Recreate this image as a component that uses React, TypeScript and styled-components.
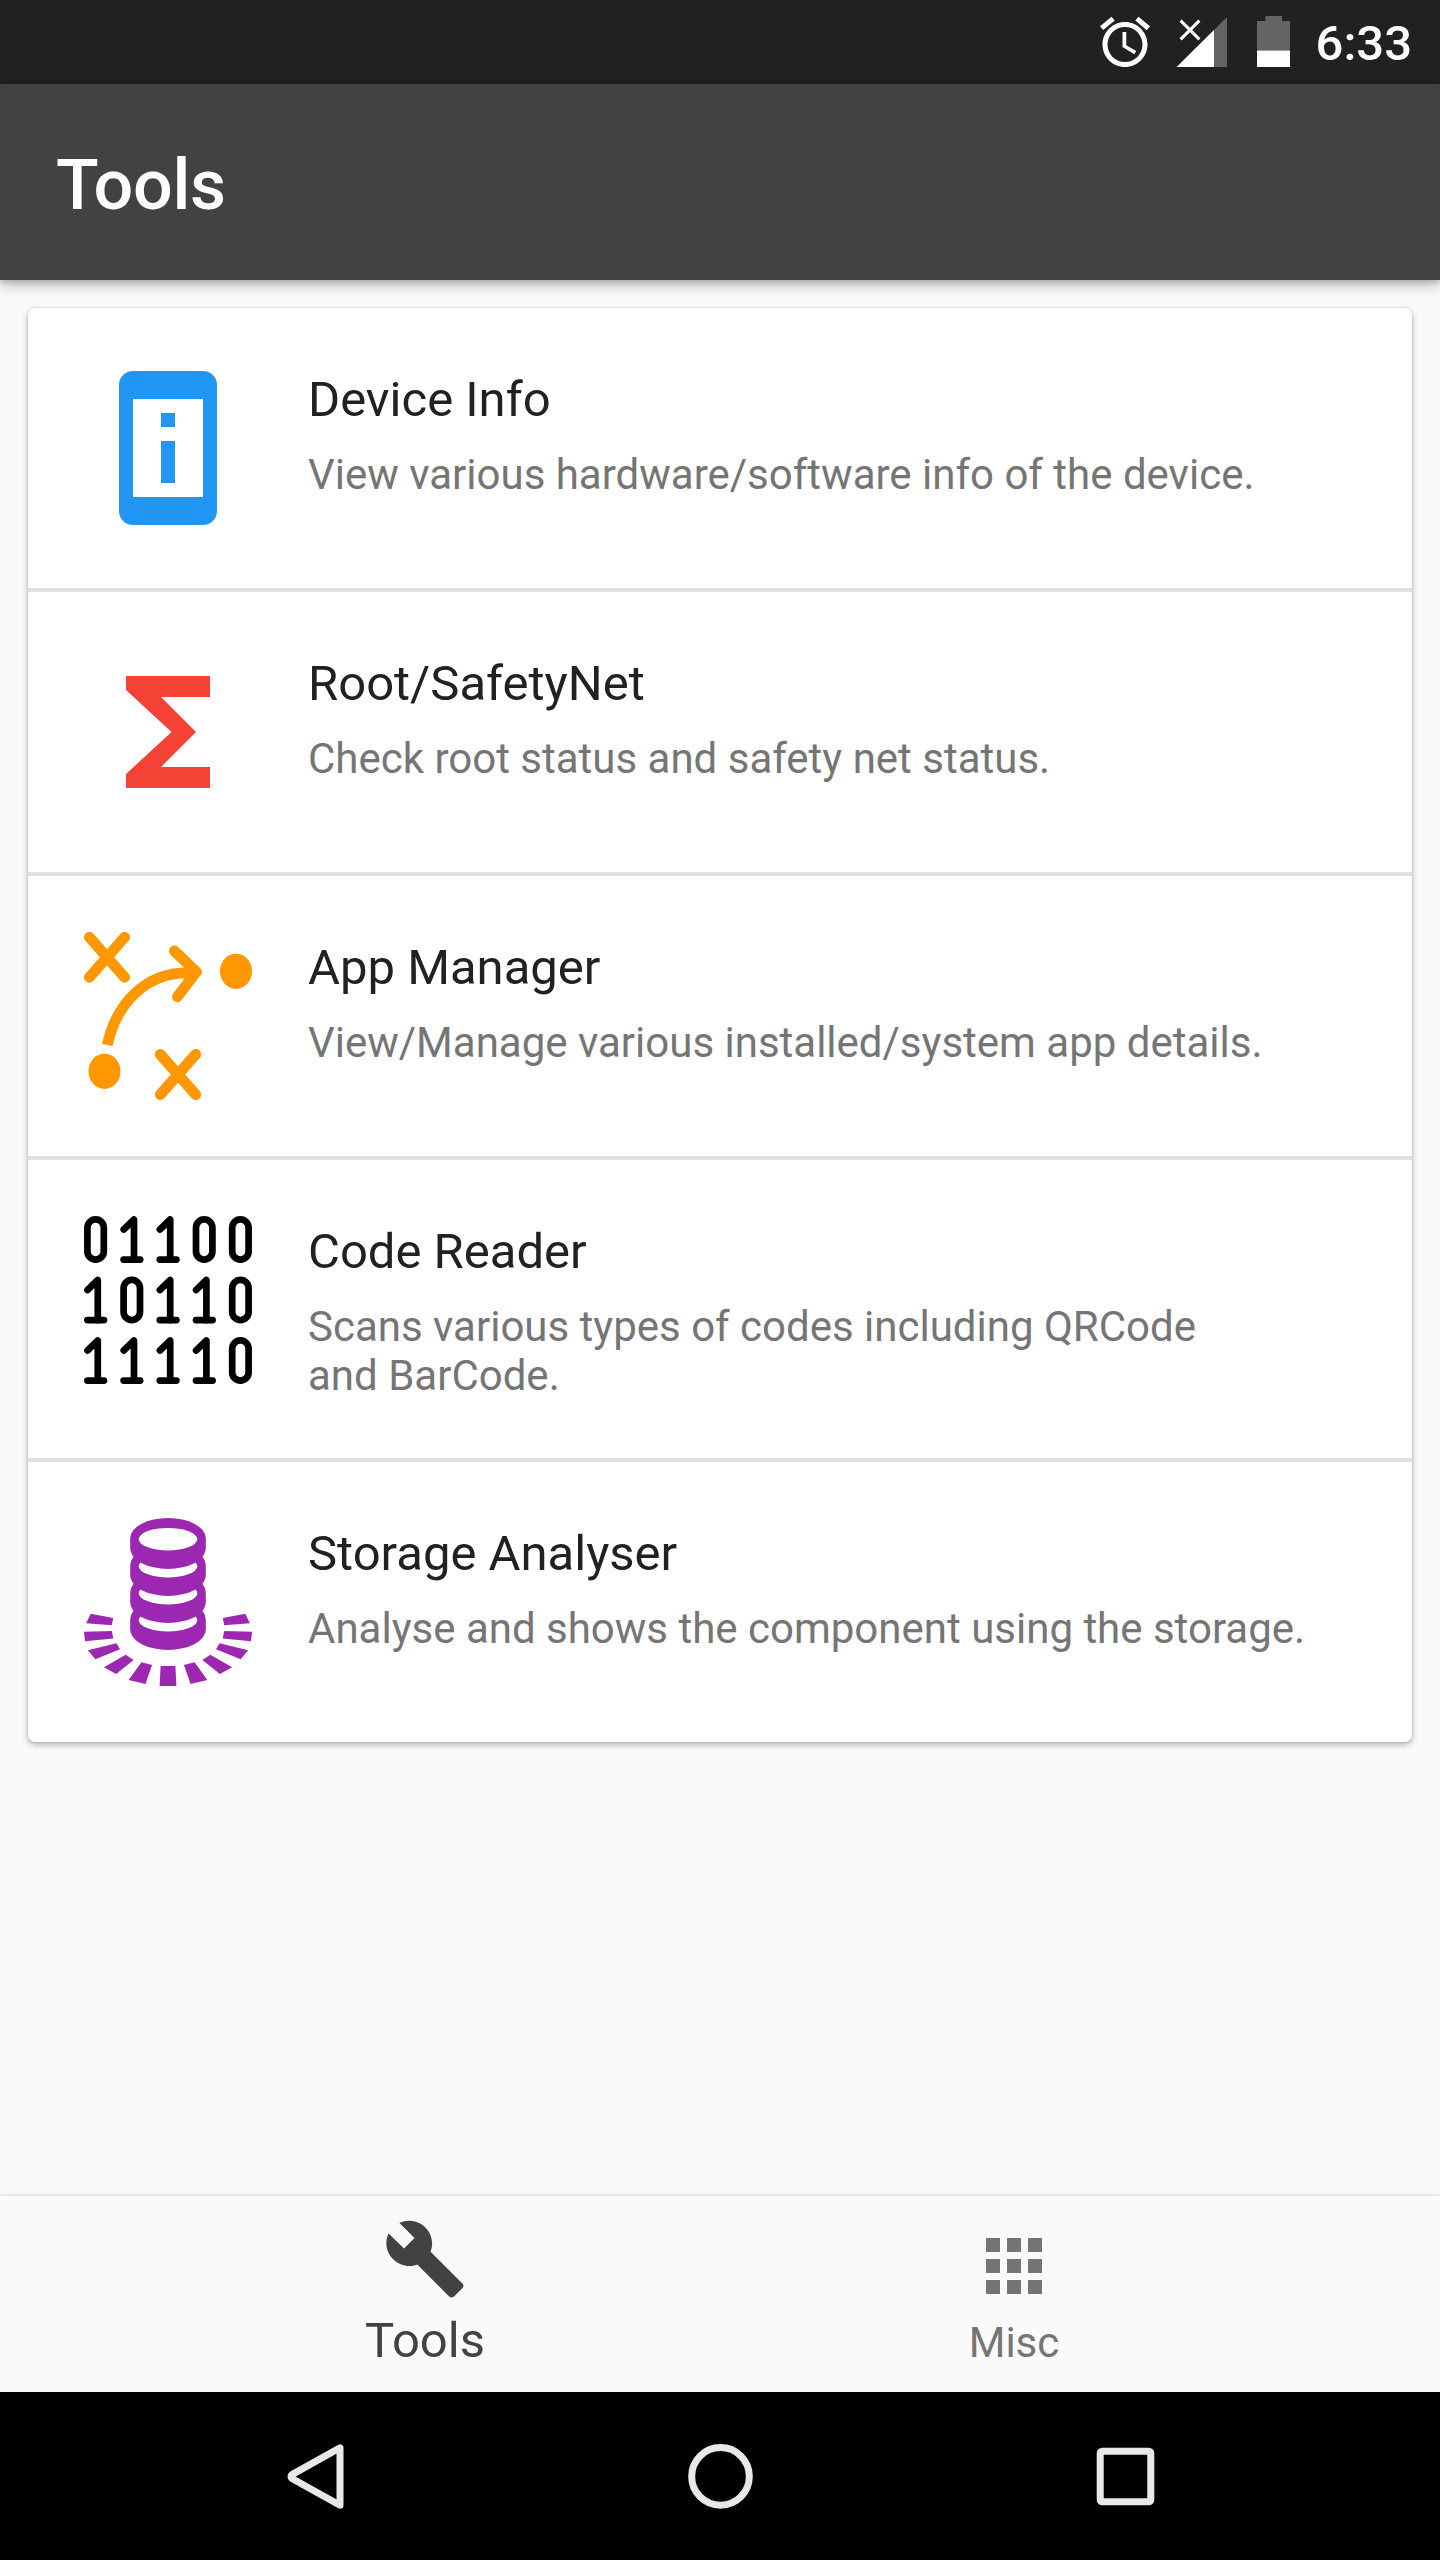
import React from "react";
import styled, { createGlobalStyle } from "styled-components";

const GlobalStyle = createGlobalStyle`
  * { box-sizing: border-box; }
  body { margin: 0; background: #fafafa; }
`;

const Screen = styled.div`
  display: flex;
  flex-direction: column;
  width: 1440px;
  height: 2560px;
  overflow: hidden;
  background: #fafafa;
  font-family: Roboto, "Liberation Sans", sans-serif;
`;

const StatusBar = styled.header`
  display: flex;
  align-items: flex-start;
  justify-content: flex-end;
  height: 84px;
  padding: 12px 28px 0 0;
  background: #212121;
  color: #fff;
  flex: none;
`;

const StatusIcons = styled.div`
  display: flex;
  height: 60px;
  margin-right: 25px;
`;

const Clock = styled.time`
  font-size: 49px;
  font-weight: 500;
  line-height: 64px;
`;

const AppBar = styled.div`
  display: flex;
  align-items: center;
  height: 196px;
  padding: 6px 56px 0;
  background: #424242;
  box-shadow: 0 5px 12px rgba(0, 0, 0, 0.28), 0 2px 5px rgba(0, 0, 0, 0.12);
  flex: none;
`;

const Title = styled.h1`
  margin: 0;
  color: #fff;
  font-size: 70px;
  font-weight: 500;
  line-height: 82px;
  letter-spacing: -0.3px;
`;

const Content = styled.main`
  flex: 1;
  padding: 28px;
`;

const Card = styled.ul`
  margin: 0;
  padding: 0;
  list-style: none;
  background: #fff;
  border-radius: 7px;
  box-shadow: 0 3px 6px rgba(0, 0, 0, 0.27), 0 0 3px rgba(0, 0, 0, 0.16);
`;

const Row = styled.li`
  display: flex;
  gap: 56px;
  padding: 56px;

  & + & {
    border-top: 4px solid #e0e0e0;
  }
`;

const RowIcon = styled.svg`
  display: block;
  width: 168px;
  height: 168px;
  flex: none;
`;

const RowText = styled.div`
  display: flex;
  flex-direction: column;
  gap: 22px;
  padding: 7px 0 2px;
`;

const RowTitle = styled.span`
  color: #212121;
  font-size: 49px;
  line-height: 57px;
  white-space: nowrap;
`;

const RowSummary = styled.span`
  color: #757575;
  font-size: 42px;
  line-height: 49px;
  white-space: pre;
`;

const BottomNav = styled.nav`
  display: flex;
  justify-content: center;
  height: 196px;
  padding-right: 1px;
  background: #fafafa;
  box-shadow: 0 -1px 4px rgba(0, 0, 0, 0.07), 0 -2px 0 rgba(0, 0, 0, 0.03);
  flex: none;
`;

const Tab = styled.div<{ $active?: boolean }>`
  display: flex;
  flex-direction: column;
  align-items: center;
  justify-content: flex-end;
  gap: ${(p) => (p.$active ? "11px" : "10px")};
  width: 589px;
  padding-bottom: ${(p) => (p.$active ? "23px" : "25px")};
  color: ${(p) => (p.$active ? "#424242" : "#757575")};
  font-size: ${(p) => (p.$active ? "49px" : "42px")};
  line-height: ${(p) => (p.$active ? "57px" : "49px")};
`;

const TabIcon = styled.svg`
  display: block;
  width: 84px;
  height: 84px;
  fill: currentColor;
`;

const SystemBar = styled.footer`
  display: flex;
  align-items: center;
  justify-content: center;
  gap: 313px;
  height: 168px;
  background: #000;
  flex: none;
`;

const SystemIcon = styled.svg`
  display: block;
  width: 92px;
  height: 92px;
  fill: none;
  stroke: #e8e8e8;
  stroke-width: 7;
  stroke-linejoin: round;
`;

const DeviceIcon = () => (
  <RowIcon viewBox="0 0 24 24" fill="#2196f3">
    <path
      fillRule="evenodd"
      d="M7 1h10a2 2 0 0 1 2 2v18a2 2 0 0 1-2 2H7a2 2 0 0 1-2-2V3a2 2 0 0 1 2-2zM7 5v14h10V5zM11 7h2v2h-2zM11 11h2v6h-2z"
    />
  </RowIcon>
);

const SigmaIcon = () => (
  <RowIcon viewBox="0 0 24 24" fill="#f44336">
    <path d="M18 4H6v2l6.5 6L6 18v2h12v-3h-7l5-5-5-5h7z" />
  </RowIcon>
);

const StrategyIcon = () => (
  <RowIcon
    viewBox="0 0 168 168"
    fill="none"
    stroke="#ff9800"
    strokeWidth="10.8"
    strokeLinecap="round"
    strokeLinejoin="round"
  >
    <path d="M5.4 5.3 40.6 45.3M40.6 5.3 5.4 45.3" />
    <path d="M76.3 122.4 111.7 162.6M111.7 122.4 76.3 162.6" />
    <path d="M90.4 19 112.4 39.8 93.4 64.8" />
    <path strokeLinecap="butt" d="M23.3 113C32 72 62 38.5 108 41" />
    <ellipse cx="152" cy="39.3" rx="16" ry="17.6" fill="#ff9800" stroke="none" />
    <ellipse cx="20.5" cy="139.3" rx="16" ry="17.6" fill="#ff9800" stroke="none" />
  </RowIcon>
);

const BITS = ["01100", "10110", "11110"];

const BinaryIcon = () => (
  <RowIcon
    viewBox="0 0 168 168"
    fill="none"
    stroke="#000"
    strokeWidth="6.7"
    strokeLinecap="round"
    strokeLinejoin="round"
  >
    {BITS.map((row, r) =>
      row.split("").map((bit, c) => (
        <g key={`${r}${c}`} transform={`translate(${c * 36.2} ${r * 60.5})`}>
          {bit === "0" ? (
            <rect x="3.4" y="3.4" width="16.4" height="40.2" rx="8.2" />
          ) : (
            <>
              <polyline points="3.5,13.5 13.8,3.5 13.8,43.6" />
              <line x1="3.4" y1="43.6" x2="20" y2="43.6" />
            </>
          )}
        </g>
      ))
    )}
  </RowIcon>
);

const RAYS = [
  "6.7,95.7 29.2,100 27.8,107.3 2.1,105.3",
  "0,113.7 27.8,113 29.2,120.6 1,123.3",
  "3.9,132.3 32.4,125.3 36,131.3 11.4,141.3",
  "19.9,149.3 41.7,136.7 49.6,142 32.1,156",
  "44.6,162 57.4,144.3 68.1,147 61.4,166",
];

const StorageIcon = () => (
  <RowIcon viewBox="0 0 168 168" fill="#9c27b0">
    {[3, 2, 1, 0].map((i) => (
      <g key={i} transform={`translate(0 ${i * 27})`}>
        <path d="M46.2 20.3a37.8 20.3 0 0 1 75.6 0v10.3a37.8 20.3 0 0 1-75.6 0z" />
        <ellipse cx="84" cy="21.2" rx="29.3" ry="11.2" fill="#fff" />
      </g>
    ))}
    {RAYS.map((points) => (
      <g key={points}>
        <polygon points={points} />
        <polygon points={points} transform="translate(168 0) scale(-1 1)" />
      </g>
    ))}
    <polygon points="76.6,148 91.4,148 92.4,168 75.6,168" />
  </RowIcon>
);

const TOOLS = [
  {
    title: "Device Info",
    summary: "View various hardware/software info of the device.",
    Icon: DeviceIcon,
  },
  {
    title: "Root/SafetyNet",
    summary: "Check root status and safety net status.",
    Icon: SigmaIcon,
  },
  {
    title: "App Manager",
    summary: "View/Manage various installed/system app details.",
    Icon: StrategyIcon,
  },
  {
    title: "Code Reader",
    summary: "Scans various types of codes including QRCode\nand BarCode.",
    Icon: BinaryIcon,
  },
  {
    title: "Storage Analyser",
    summary: "Analyse and shows the component using the storage.",
    Icon: StorageIcon,
  },
];

export default function App() {
  return (
    <Screen>
      <GlobalStyle />
      <StatusBar>
        <StatusIcons>
          <svg width="60" height="60" viewBox="0 0 24 24" fill="#fff">
            <path d="M22 5.72l-4.6-3.86-1.29 1.53 4.6 3.86L22 5.72zM7.88 3.39L6.6 1.86 2 5.71l1.29 1.53 4.59-3.85zM12.5 8H11v6l4.75 2.85.75-1.23-4-2.37V8zM12 4c-4.97 0-9 4.03-9 9s4.02 9 9 9c4.97 0 9-4.03 9-9s-4.03-9-9-9zm0 16c-3.87 0-7-3.13-7-7s3.13-7 7-7 7 3.13 7 7-3.13 7-7 7z" />
          </svg>
          <svg width="84" height="60" viewBox="0 0 84 60">
            <path d="M72 5v50H21.7z" fill="#646464" />
            <path d="M59 18v37H21.7z" fill="#fff" />
            <path d="M25.6 8.6 44.4 27.4M44.4 8.6 25.6 27.4" stroke="#fff" strokeWidth="3" />
          </svg>
          <svg width="52" height="60" viewBox="0 0 52 60">
            <path d="M26.5 4H43v5h8v29.500H18V9h8.500z" fill="#646464" />
            <path d="M18 38.500h33V55H18z" fill="#fff" />
          </svg>
        </StatusIcons>
        <Clock>6:33</Clock>
      </StatusBar>
      <AppBar>
        <Title>Tools</Title>
      </AppBar>
      <Content>
        <Card>
          {TOOLS.map(({ title, summary, Icon }) => (
            <Row key={title}>
              <Icon />
              <RowText>
                <RowTitle>{title}</RowTitle>
                <RowSummary>{summary}</RowSummary>
              </RowText>
            </Row>
          ))}
        </Card>
      </Content>
      <BottomNav>
        <Tab $active>
          <TabIcon viewBox="0 0 24 24">
            <path d="M22.7 19l-9.1-9.1c.9-2.3.4-5-1.500-6.900-2-2-5-2.400-7.400-1.300L9 6 6 9 1.600 4.700C.4 7.100.9 10.100 2.900 12.100c1.900 1.900 4.600 2.400 6.900 1.500l9.100 9.100c.4.4 1 .4 1.400 0l2.300-2.300c.5-.4.5-1.100.1-1.400z" />
          </TabIcon>
          Tools
        </Tab>
        <Tab>
          <TabIcon viewBox="0 0 24 24">
            <path d="M4 8h4V4H4v4zm6 12h4v-4h-4v4zm-6 0h4v-4H4v4zm0-6h4v-4H4v4zm6 0h4v-4h-4v4zm6-10v4h4V4h-4zm-6 4h4V4h-4v4zm6 6h4v-4h-4v4zm0 6h4v-4h-4v4z" />
          </TabIcon>
          Misc
        </Tab>
      </BottomNav>
      <SystemBar>
        <SystemIcon viewBox="0 0 92 92">
          <path d="M71 17.800v57.400L23.400 48.700a2.500 2.500 0 0 1 0-4.400z" />
        </SystemIcon>
        <SystemIcon viewBox="0 0 92 92">
          <circle cx="46.500" cy="46.400" r="28.800" />
        </SystemIcon>
        <SystemIcon viewBox="0 0 92 92">
          <rect x="21.200" y="21.200" width="50.600" height="50.600" rx="2" />
        </SystemIcon>
      </SystemBar>
    </Screen>
  );
}
